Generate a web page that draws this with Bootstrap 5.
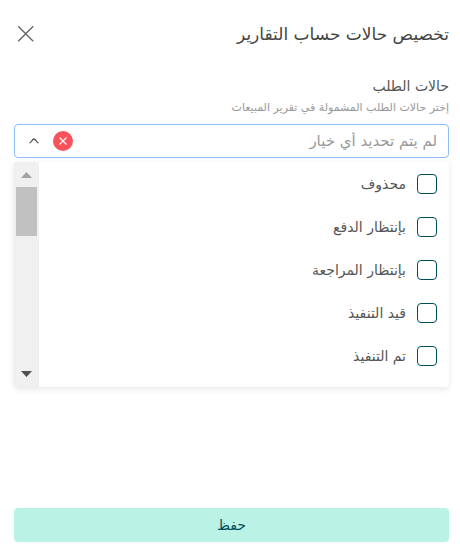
<!DOCTYPE html>
<html lang="ar" dir="rtl">
<head>
<meta charset="utf-8">
<meta name="viewport" content="width=device-width, initial-scale=1">
<title>تخصيص حالات حساب التقارير</title>
<link href="https://cdn.jsdelivr.net/npm/bootstrap@5.3.0/dist/css/bootstrap.min.css" rel="stylesheet">
<style>
  body { font-family: "DejaVu Sans", sans-serif; font-size: 14px; line-height: 20px; color: #555; background: #fff; }
  .panel { padding: 20px 11px 12px 14px; }
  .panel-title { font-size: 17px; line-height: 28px; color: #444; }
  .close-btn { width: 24px; height: 28px; color: #666; }
  .field { margin-top: 28px; }
  .hint { font-size: 11px; color: #999; line-height: 16px; margin: 4px 0 8px; }
  .picker { height: 34px; border: 1px solid #8fbcf5; border-radius: 4px; padding: 0 11px; }
  .picker input { font-size: 15px; color: #555; outline: 0; min-width: 0; }
  .picker input::placeholder { color: #999; opacity: 1; }
  .picker-actions { gap: 11px; }
  .clear-btn { width: 20px; height: 20px; background: #fa525b; color: #fff; }
  .toggle-btn { width: 16px; height: 20px; color: #555; }
  .menu { margin-top: 4px; height: 225px; border-radius: 0 0 4px 4px; box-shadow: 0 2px 6px rgba(0,0,0,.1); }
  .options { padding: 0 12px; }
  .option { height: 43px; gap: 11px; }
  .option .form-check-input { width: 20px; height: 20px; border: 1px solid #004d5a; border-radius: 4px; }
  .track { width: 25px; background: #f0f0f0; padding: 2px; }
  .thumb { width: 21px; height: 49px; background: #c1c1c1; margin-top: 9px; }
  .save-btn { height: 34px; background: #baf3e6; color: #004d5a; font-size: 14px; border-radius: 4px; }
</style>
<script src="https://cdn.jsdelivr.net/npm/bootstrap@5.3.0/dist/js/bootstrap.bundle.min.js"></script>
</head>
<body>
<main class="panel d-flex flex-column min-vh-100">
  <header class="d-flex justify-content-between align-items-center">
    <h1 class="panel-title fw-normal m-0">تخصيص حالات حساب التقارير</h1>
    <button type="button" class="close-btn btn border-0 p-0 d-flex align-items-center justify-content-center" aria-label="إغلاق">
      <svg width="18" height="18" viewBox="0 0 18 18" fill="none" stroke="currentColor" stroke-width="1.4"><path d="M1.200 1.200l15 15M16.200 1.200l-15 15"/></svg>
    </button>
  </header>

  <div class="field">
    <label for="statuses" class="d-block">حالات الطلب</label>
    <p class="hint" id="statuses-hint">إختر حالات الطلب المشمولة في تقرير المبيعات</p>
    <div class="picker d-flex align-items-center">
      <input id="statuses" type="text" class="border-0 p-0 flex-grow-1 bg-transparent" placeholder="لم يتم تحديد أي خيار" aria-describedby="statuses-hint">
      <div class="picker-actions d-flex align-items-center">
        <button type="button" class="clear-btn btn border-0 rounded-circle p-0 d-flex align-items-center justify-content-center" aria-label="مسح">
          <svg width="10" height="10" viewBox="0 0 10 10" fill="none" stroke="currentColor" stroke-width="1.1"><path d="M1.500 1.500l7 7M8.500 1.500l-7 7"/></svg>
        </button>
        <button type="button" class="toggle-btn btn border-0 p-0 d-flex align-items-center justify-content-center" aria-label="إغلاق القائمة">
          <svg width="10" height="6" viewBox="0 0 10 6" fill="none" stroke="currentColor" stroke-width="1.3"><path d="M.6 5.200C2.600 4.400 3 1 5 1s2.400 3.400 4.400 4.200"/></svg>
        </button>
      </div>
    </div>
    <div class="menu d-flex overflow-hidden">
      <div class="options flex-grow-1">
        <div class="option d-flex align-items-center"><input class="form-check-input m-0" type="checkbox" id="s1"><label for="s1">محذوف</label></div>
        <div class="option d-flex align-items-center"><input class="form-check-input m-0" type="checkbox" id="s2"><label for="s2">بإنتظار الدفع</label></div>
        <div class="option d-flex align-items-center"><input class="form-check-input m-0" type="checkbox" id="s3"><label for="s3">بإنتظار المراجعة</label></div>
        <div class="option d-flex align-items-center"><input class="form-check-input m-0" type="checkbox" id="s4"><label for="s4">قيد التنفيذ</label></div>
        <div class="option d-flex align-items-center"><input class="form-check-input m-0" type="checkbox" id="s5"><label for="s5">تم التنفيذ</label></div>
      </div>
      <div class="track d-flex flex-column align-items-center" aria-hidden="true">
        <svg class="mt-2" width="11" height="6" viewBox="0 0 11 6" fill="#a3a3a3"><path d="M0 6L5.500 0 11 6z"/></svg>
        <div class="thumb"></div>
        <svg class="mt-auto mb-2" width="11" height="6" viewBox="0 0 11 6" fill="#505050"><path d="M0 0h11L5.500 6z"/></svg>
      </div>
    </div>
  </div>

  <button type="button" class="save-btn btn border-0 w-100 p-0 mt-auto">حفظ</button>
</main>
</body>
</html>
